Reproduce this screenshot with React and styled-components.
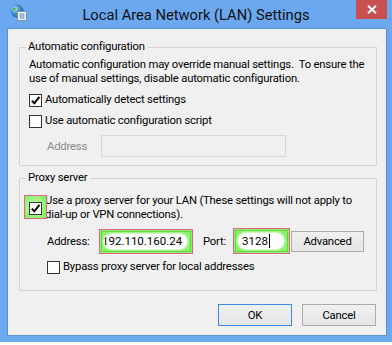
import React from 'react';
import styled, { createGlobalStyle } from 'styled-components';

const GlobalStyle = createGlobalStyle`
  html, body {
    margin: 0;
    padding: 0;
    background: #ffffff;
  }
  body {
    font-family: Roboto, 'Noto Sans', sans-serif;
  }
`;

const Frame = styled.div`
  width: 392px;
  height: 342px;
  box-sizing: border-box;
  background: #6ba8f0;
  padding-bottom: 6px;
  display: flex;
  flex-direction: column;
`;

const TitleBar = styled.div`
  height: 28px;
  display: grid;
  grid-template-columns: 1fr auto 1fr;
  align-items: start;
`;

const TitleIcon = styled.div`
  margin: 4px 0 0 10px;
  width: 17px;
  height: 17px;
`;

const Title = styled.div`
  font-size: 14.7px;
  line-height: 28px;
  padding-top: 1px;
  color: #111;
  white-space: nowrap;
`;

const CloseBtn = styled.div`
  justify-self: end;
  margin-right: 5px;
  width: 31px;
  height: 19px;
  background: #c75050;
  display: flex;
  align-items: center;
  justify-content: center;
`;

const Client = styled.div`
  flex: 1;
  margin: 0 5px 0 7px;
  border: 1px solid #5a90d6;
  background: #f0f0f0;
  padding: 11px 9px 0 11px;
  display: flex;
  flex-direction: column;
  font-size: 11.3px;
  letter-spacing: -0.2px;
  color: #000;
`;

const Group = styled.fieldset`
  margin: ${p => p.$top || 0}px 0 0 0;
  padding: 0 8px ${p => p.$bottom}px 9px;
  border: 1px solid #d5d5d5;
  min-width: 0;
  display: flex;
  flex-direction: column;
`;

const Legend = styled.legend`
  padding: 0 2px;
  margin-left: -3px;
  line-height: 14px;
`;

const Note = styled.div`
  margin-top: 4px;
  line-height: 14px;
  white-space: nowrap;
`;

const CheckRow = styled.label`
  display: flex;
  align-items: center;
  margin-top: ${p => p.$top}px;
  padding-left: ${p => p.$indent || 0}px;
  line-height: 14px;
  white-space: nowrap;
`;

const Box = styled.span`
  flex: none;
  width: 11px;
  height: 11px;
  border: 1px solid #333;
  background: #fff;
  margin-right: 3px;
  display: flex;
  align-items: center;
  justify-content: center;
`;

const Marked = styled.span`
  position: relative;
  z-index: 1;
  display: flex;

  &::before {
    content: '';
    position: absolute;
    left: -5px;
    top: -7px;
    width: 21px;
    height: 22px;
    border: 1px solid #e46488;
    background: radial-gradient(circle at 45% 50%, #d4fcc2 0, #a4f786 8px, #86f064 13px);
    z-index: -1;
  }
`;

const FieldRow = styled.div`
  display: flex;
  align-items: center;
  margin-top: ${p => p.$top}px;
  padding-left: 18px;
`;

const FieldLabel = styled.span`
  width: ${p => p.$w}px;
  flex: none;
  color: ${p => (p.$dim ? '#8a8a8a' : '#000')};
  white-space: nowrap;
`;

const DisabledInput = styled.div`
  width: 183px;
  height: 20px;
  border: 1px solid #d9d9d9;
  background: #f0f0f0;
`;

const HiField = styled.div`
  width: ${p => p.$w}px;
  height: ${p => p.$h}px;
  box-sizing: border-box;
  border: 1px solid #e46488;
  background: #8af268;
  padding: 1px;
  flex: none;
`;

const HiInner = styled.div`
  height: 100%;
  box-sizing: border-box;
  border: 1px solid #66d648;
  padding: 2px 3px 2px 2px;
`;

const Pill = styled.div`
  height: 100%;
  background: #fff;
  border-radius: 9px;
  box-shadow: 0 0 2px 1px #e9fde0;
  display: flex;
  align-items: center;
  overflow: hidden;
  padding-left: ${p => p.$pad}px;
  white-space: nowrap;
  font-size: 11.5px;
  letter-spacing: 0;
`;

const Scrolled = styled.span`
  margin-left: -3px;
`;

const Caret = styled.span`
  display: inline-block;
  width: 1px;
  height: 14px;
  background: #000;
  margin-left: 1px;
`;

const PortLabel = styled.span`
  margin-left: 10px;
  width: 30px;
  flex: none;
`;

const Button = styled.div`
  width: ${p => p.$w}px;
  height: ${p => p.$h}px;
  box-sizing: border-box;
  border: 1px solid ${p => (p.$primary ? '#3c8ce6' : '#acacac')};
  background: linear-gradient(#f0f0f0, #e5e5e5);
  display: flex;
  align-items: center;
  justify-content: center;
  margin-left: ${p => p.$left || 0}px;
  flex: none;
`;

const Footer = styled.div`
  display: flex;
  justify-content: flex-end;
  margin-top: 13px;
  padding-right: 1px;
  gap: 10px;
`;

const Check = () => (
  <svg width="11" height="11" viewBox="0 0 11 11">
    <path d="M1.8 5.6 L4.3 8.3 L9.4 1.9" fill="none" stroke="#000" strokeWidth="2" />
  </svg>
);

const LanIcon = () => (
  <svg width="17" height="17" viewBox="0 0 17 17">
    <defs>
      <radialGradient id="globe" cx="35%" cy="35%" r="70%">
        <stop offset="0" stopColor="#b9e4ff" />
        <stop offset="0.5" stopColor="#3a8fd8" />
        <stop offset="1" stopColor="#1d5aa6" />
      </radialGradient>
    </defs>
    <circle cx="7" cy="7" r="6.5" fill="url(#globe)" />
    <path d="M3 4 Q5 3 6 5 Q5 7 3.5 7 Z M8 2.5 Q10 3 10 5 L8 5 Z M6 9 Q8 8 9 10 Q8 12.5 6.5 12 Z" fill="#5fb33a" />
    <rect x="7.5" y="7.5" width="9" height="9" fill="#f7f9fc" stroke="#7c8ea6" />
    <path d="M9.5 10 h5 M9.5 12 h5 M9.5 14 h5" stroke="#3a76c4" strokeWidth="1" />
  </svg>
);

const CloseGlyph = () => (
  <svg width="10" height="9" viewBox="0 0 10 9">
    <path d="M1 0.8 L9 8.2 M9 0.8 L1 8.2" stroke="#fff" strokeWidth="1.9" />
  </svg>
);

export default function App() {
  return (
    <>
      <GlobalStyle />
      <Frame>
        <TitleBar>
          <TitleIcon>
            <LanIcon />
          </TitleIcon>
          <Title>Local Area Network (LAN) Settings</Title>
          <CloseBtn>
            <CloseGlyph />
          </CloseBtn>
        </TitleBar>
        <Client>
          <Group $bottom={8}>
            <Legend>Automatic configuration</Legend>
            <Note>
              Automatic configuration may override manual settings.{'\u00a0'} To ensure the
              <br />
              use of manual settings, disable automatic configuration.
            </Note>
            <CheckRow $top={7}>
              <Box>
                <Check />
              </Box>
              Automatically detect settings
            </CheckRow>
            <CheckRow $top={7}>
              <Box />
              Use automatic configuration script
            </CheckRow>
            <FieldRow $top={7}>
              <FieldLabel $w={54} $dim>Address</FieldLabel>
              <DisabledInput />
            </FieldRow>
          </Group>

          <Group $top={5} $bottom={16}>
            <Legend>Proxy server</Legend>
            <CheckRow $top={9}>
              <Marked>
                <Box>
                  <Check />
                </Box>
              </Marked>
              <span>
                Use a proxy server for your LAN (These settings will not apply to
                <br />
                dial-up or VPN connections).
              </span>
            </CheckRow>
            <FieldRow $top={6}>
              <FieldLabel $w={52}>Address:</FieldLabel>
              <HiField $w={94} $h={25}>
                <HiInner>
                  <Pill $pad={1}>
                    <Scrolled>192.110.160.24</Scrolled>
                  </Pill>
                </HiInner>
              </HiField>
              <PortLabel>Port:</PortLabel>
              <HiField $w={57} $h={26}>
                <HiInner>
                  <Pill $pad={4}>
                    3128
                    <Caret />
                  </Pill>
                </HiInner>
              </HiField>
              <Button $w={73} $h={21} $left={1}>Advanced</Button>
            </FieldRow>
            <CheckRow $top={6} $indent={18}>
              <Box />
              Bypass proxy server for local addresses
            </CheckRow>
          </Group>

          <Footer>
            <Button $w={74} $h={22} $primary>OK</Button>
            <Button $w={74} $h={22}>Cancel</Button>
          </Footer>
        </Client>
      </Frame>
    </>
  );
}
